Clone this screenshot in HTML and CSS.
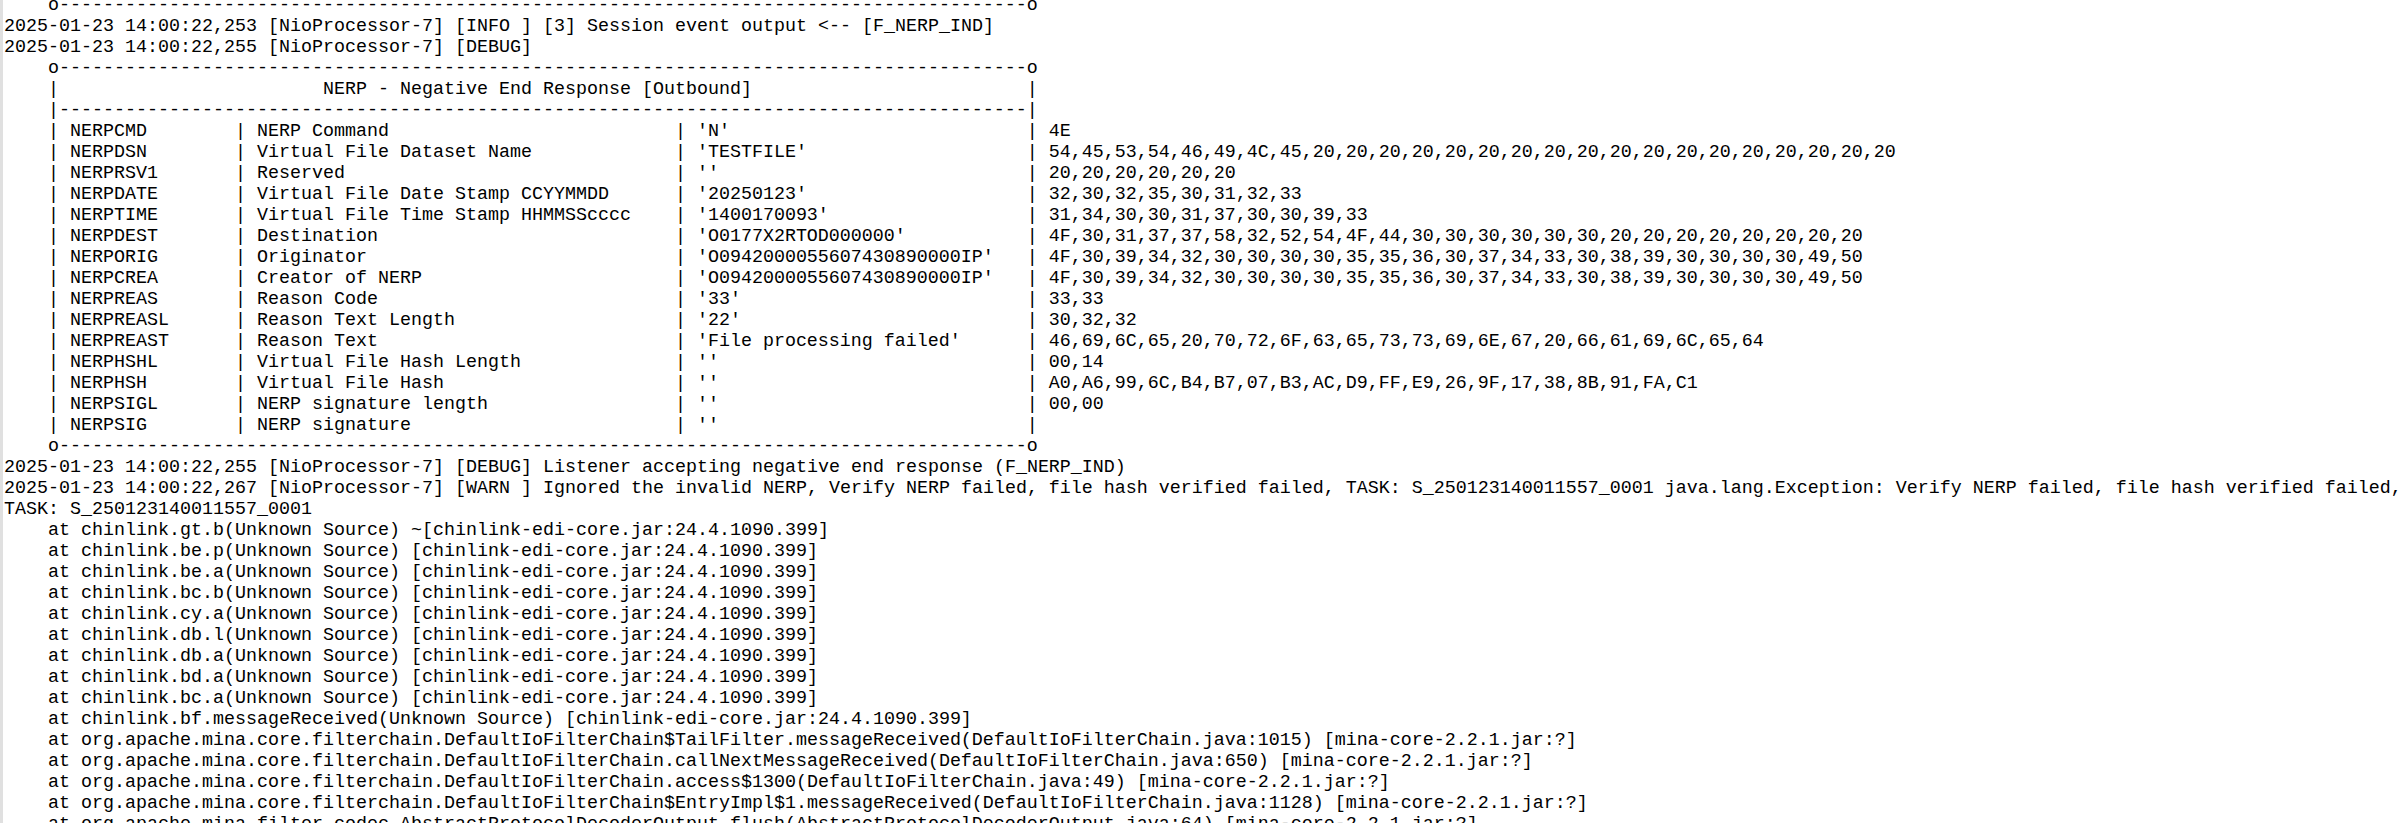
FILE: index.html
```html
<!DOCTYPE html>
<html lang="en">
<head>
<meta charset="utf-8">
<title>Log</title>
<link rel="stylesheet" href="styles.css">
</head>
<body>
<div class="log">
<div class="line ind">o----------------------------------------------------------------------------------------o</div>
<div class="line">2025-01-23 14:00:22,253 [NioProcessor-7] [INFO ] [3] Session event output &lt;-- [F_NERP_IND]</div>
<div class="line">2025-01-23 14:00:22,255 [NioProcessor-7] [DEBUG]</div>
<div class="line ind">o----------------------------------------------------------------------------------------o</div>
<div class="line ind frow"><span class="side">|</span><span class="title">NERP - Negative End Response [Outbound]</span><span class="side">|</span></div>
<div class="line ind">|----------------------------------------------------------------------------------------|</div>
<div class="line ind frow"><span class="cn">| NERPCMD</span><span class="cd">| NERP Command</span><span class="cv">| 'N'</span><span>| 4E</span></div>
<div class="line ind frow"><span class="cn">| NERPDSN</span><span class="cd">| Virtual File Dataset Name</span><span class="cv">| 'TESTFILE'</span><span>| 54,45,53,54,46,49,4C,45,20,20,20,20,20,20,20,20,20,20,20,20,20,20,20,20,20,20</span></div>
<div class="line ind frow"><span class="cn">| NERPRSV1</span><span class="cd">| Reserved</span><span class="cv">| ''</span><span>| 20,20,20,20,20,20</span></div>
<div class="line ind frow"><span class="cn">| NERPDATE</span><span class="cd">| Virtual File Date Stamp CCYYMMDD</span><span class="cv">| '20250123'</span><span>| 32,30,32,35,30,31,32,33</span></div>
<div class="line ind frow"><span class="cn">| NERPTIME</span><span class="cd">| Virtual File Time Stamp HHMMSScccc</span><span class="cv">| '1400170093'</span><span>| 31,34,30,30,31,37,30,30,39,33</span></div>
<div class="line ind frow"><span class="cn">| NERPDEST</span><span class="cd">| Destination</span><span class="cv">| 'O0177X2RTOD000000'</span><span>| 4F,30,31,37,37,58,32,52,54,4F,44,30,30,30,30,30,30,20,20,20,20,20,20,20,20</span></div>
<div class="line ind frow"><span class="cn">| NERPORIG</span><span class="cd">| Originator</span><span class="cv">| 'O0942000055607430890000IP'</span><span>| 4F,30,39,34,32,30,30,30,30,35,35,36,30,37,34,33,30,38,39,30,30,30,30,49,50</span></div>
<div class="line ind frow"><span class="cn">| NERPCREA</span><span class="cd">| Creator of NERP</span><span class="cv">| 'O0942000055607430890000IP'</span><span>| 4F,30,39,34,32,30,30,30,30,35,35,36,30,37,34,33,30,38,39,30,30,30,30,49,50</span></div>
<div class="line ind frow"><span class="cn">| NERPREAS</span><span class="cd">| Reason Code</span><span class="cv">| '33'</span><span>| 33,33</span></div>
<div class="line ind frow"><span class="cn">| NERPREASL</span><span class="cd">| Reason Text Length</span><span class="cv">| '22'</span><span>| 30,32,32</span></div>
<div class="line ind frow"><span class="cn">| NERPREAST</span><span class="cd">| Reason Text</span><span class="cv">| 'File processing failed'</span><span>| 46,69,6C,65,20,70,72,6F,63,65,73,73,69,6E,67,20,66,61,69,6C,65,64</span></div>
<div class="line ind frow"><span class="cn">| NERPHSHL</span><span class="cd">| Virtual File Hash Length</span><span class="cv">| ''</span><span>| 00,14</span></div>
<div class="line ind frow"><span class="cn">| NERPHSH</span><span class="cd">| Virtual File Hash</span><span class="cv">| ''</span><span>| A0,A6,99,6C,B4,B7,07,B3,AC,D9,FF,E9,26,9F,17,38,8B,91,FA,C1</span></div>
<div class="line ind frow"><span class="cn">| NERPSIGL</span><span class="cd">| NERP signature length</span><span class="cv">| ''</span><span>| 00,00</span></div>
<div class="line ind frow"><span class="cn">| NERPSIG</span><span class="cd">| NERP signature</span><span class="cv">| ''</span><span>|</span></div>
<div class="line ind">o----------------------------------------------------------------------------------------o</div>
<div class="line">2025-01-23 14:00:22,255 [NioProcessor-7] [DEBUG] Listener accepting negative end response (F_NERP_IND)</div>
<div class="line">2025-01-23 14:00:22,267 [NioProcessor-7] [WARN ] Ignored the invalid NERP, Verify NERP failed, file hash verified failed, TASK: S_250123140011557_0001 java.lang.Exception: Verify NERP failed, file hash verified failed,</div>
<div class="line">TASK: S_250123140011557_0001</div>
<div class="line ind">at chinlink.gt.b(Unknown Source) ~[chinlink-edi-core.jar:24.4.1090.399]</div>
<div class="line ind">at chinlink.be.p(Unknown Source) [chinlink-edi-core.jar:24.4.1090.399]</div>
<div class="line ind">at chinlink.be.a(Unknown Source) [chinlink-edi-core.jar:24.4.1090.399]</div>
<div class="line ind">at chinlink.bc.b(Unknown Source) [chinlink-edi-core.jar:24.4.1090.399]</div>
<div class="line ind">at chinlink.cy.a(Unknown Source) [chinlink-edi-core.jar:24.4.1090.399]</div>
<div class="line ind">at chinlink.db.l(Unknown Source) [chinlink-edi-core.jar:24.4.1090.399]</div>
<div class="line ind">at chinlink.db.a(Unknown Source) [chinlink-edi-core.jar:24.4.1090.399]</div>
<div class="line ind">at chinlink.bd.a(Unknown Source) [chinlink-edi-core.jar:24.4.1090.399]</div>
<div class="line ind">at chinlink.bc.a(Unknown Source) [chinlink-edi-core.jar:24.4.1090.399]</div>
<div class="line ind">at chinlink.bf.messageReceived(Unknown Source) [chinlink-edi-core.jar:24.4.1090.399]</div>
<div class="line ind">at org.apache.mina.core.filterchain.DefaultIoFilterChain$TailFilter.messageReceived(DefaultIoFilterChain.java:1015) [mina-core-2.2.1.jar:?]</div>
<div class="line ind">at org.apache.mina.core.filterchain.DefaultIoFilterChain.callNextMessageReceived(DefaultIoFilterChain.java:650) [mina-core-2.2.1.jar:?]</div>
<div class="line ind">at org.apache.mina.core.filterchain.DefaultIoFilterChain.access$1300(DefaultIoFilterChain.java:49) [mina-core-2.2.1.jar:?]</div>
<div class="line ind">at org.apache.mina.core.filterchain.DefaultIoFilterChain$EntryImpl$1.messageReceived(DefaultIoFilterChain.java:1128) [mina-core-2.2.1.jar:?]</div>
<div class="line ind">at org.apache.mina.filter.codec.AbstractProtocolDecoderOutput.flush(AbstractProtocolDecoderOutput.java:64) [mina-core-2.2.1.jar:?]</div>
</div>
</body>
</html>
```
FILE: styles.css
```css
html, body {
  margin: 0;
  padding: 0;
  background: #ffffff;
  overflow: hidden;
}

.log {
  border-left: 3px solid #e0e0e0;
  padding-left: 1px;
  margin-top: -5px;
  min-height: 900px;
  font-family: "Liberation Mono", "DejaVu Sans Mono", monospace;
  font-size: 18.333px;
  line-height: 21px;
  color: #000000;
}

.line {
  height: 21px;
  white-space: pre;
}

.ind {
  padding-left: 4ch;
}

.frow {
  display: flex;
}

.frow > span {
  flex: none;
}

.title {
  width: 88ch;
  padding-left: 24ch;
  box-sizing: border-box;
}

.cn {
  width: 17ch;
}

.cd {
  width: 40ch;
}

.cv {
  width: 32ch;
}
```
